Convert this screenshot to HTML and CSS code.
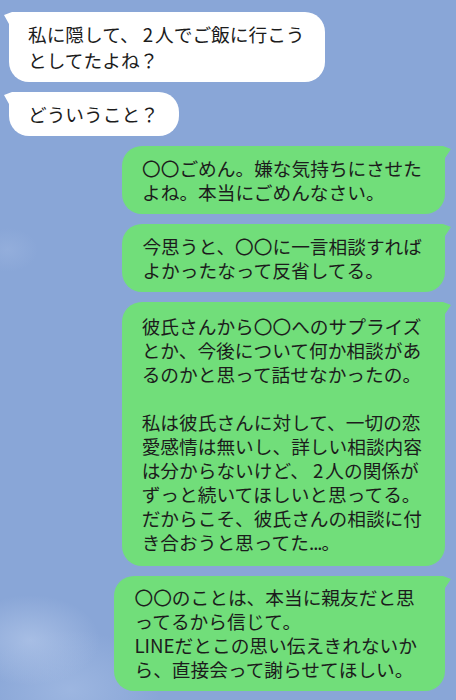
FILE: index.html
```html
<!DOCTYPE html>
<html lang="ja">
<head>
<meta charset="utf-8">
<title>LINE</title>
<link rel="stylesheet" href="styles.css">
</head>
<body>
<main class="chat">
  <div class="bubble left">私に隠して、<span class="num">2</span>人でご飯に行こう<br>としてたよね？</div>
  <div class="bubble left">どういうこと？</div>
  <div class="bubble right">〇〇ごめん。嫌な気持ちにさせた<br>よね。本当にごめんなさい。</div>
  <div class="bubble right">今思うと、〇〇に一言相談すれば<br>よかったなって反省してる。</div>
  <div class="bubble right long">彼氏さんから〇〇へのサプライズ<br>とか、今後について何か相談があ<br>るのかと思って話せなかったの。<br><br>私は彼氏さんに対して、一切の恋<br>愛感情は無いし、詳しい相談内容<br>は分からないけど、<span class="num">2</span>人の関係が<br>ずっと続いてほしいと思ってる。<br>だからこそ、彼氏さんの相談に付<br>き合おうと思ってた<span class="dots">...</span>。</div>
  <div class="bubble right wide">〇〇のことは、本当に親友だと思<br>ってるから信じて。<br>LINEだとこの思い伝えきれないか<br>ら、直接会って謝らせてほしい。</div>
</main>
</body>
</html>
```

FILE: styles.css
```css
html, body {
  margin: 0;
  padding: 0;
}

body {
  width: 456px;
  height: 700px;
  overflow: hidden;
  background-color: #89a6d7;
  background-image:
    radial-gradient(ellipse 70px 45px at 30px 640px, rgba(186, 205, 237, 0.6), rgba(186, 205, 237, 0) 100%),
    radial-gradient(ellipse 90px 60px at 70px 690px, rgba(176, 198, 234, 0.5), rgba(176, 198, 234, 0) 100%),
    radial-gradient(ellipse 30px 22px at 8px 250px, rgba(170, 192, 230, 0.3), rgba(170, 192, 230, 0) 100%);
  font-family: "Noto Sans CJK JP", "Noto Sans", sans-serif;
  color: #1c1c1c;
}

.chat {
  display: flex;
  flex-direction: column;
  gap: 10px;
  padding: 12px 11px 0 9px;
}

.bubble {
  position: relative;
  font-size: 18.7px;
  white-space: nowrap;
  box-sizing: border-box;
}

.num {
  padding: 0 2px 0 4px;
}

.dots {
  letter-spacing: -1px;
}

.left {
  align-self: flex-start;
  background: #ffffff;
  line-height: 26px;
  padding: 9px 20px 9px 19px;
  border-radius: 20px;
  border-top-left-radius: 14px;
}

.left::before {
  content: "";
  position: absolute;
  left: -5px;
  top: 0;
  width: 20px;
  height: 22px;
  background: #ffffff;
  clip-path: polygon(0 3px, 8px 0, 20px 0, 20px 22px, 5px 22px, 5px 12px);
}

.right {
  align-self: flex-end;
  background: #71de7a;
  line-height: 24px;
  padding: 10px 23px 10px 20px;
  border-radius: 20px;
  border-top-right-radius: 14px;
}

.right::before {
  content: "";
  position: absolute;
  right: -6px;
  top: 0;
  width: 20px;
  height: 22px;
  background: #71de7a;
  clip-path: polygon(100% 3px, calc(100% - 8px) 0, 0 0, 0 22px, 14px 22px, 14px 12px);
}

.long {
  padding-top: 12px;
  padding-bottom: 12px;
}

.wide {
  padding: 9px 28px 10px 20px;
}
```
